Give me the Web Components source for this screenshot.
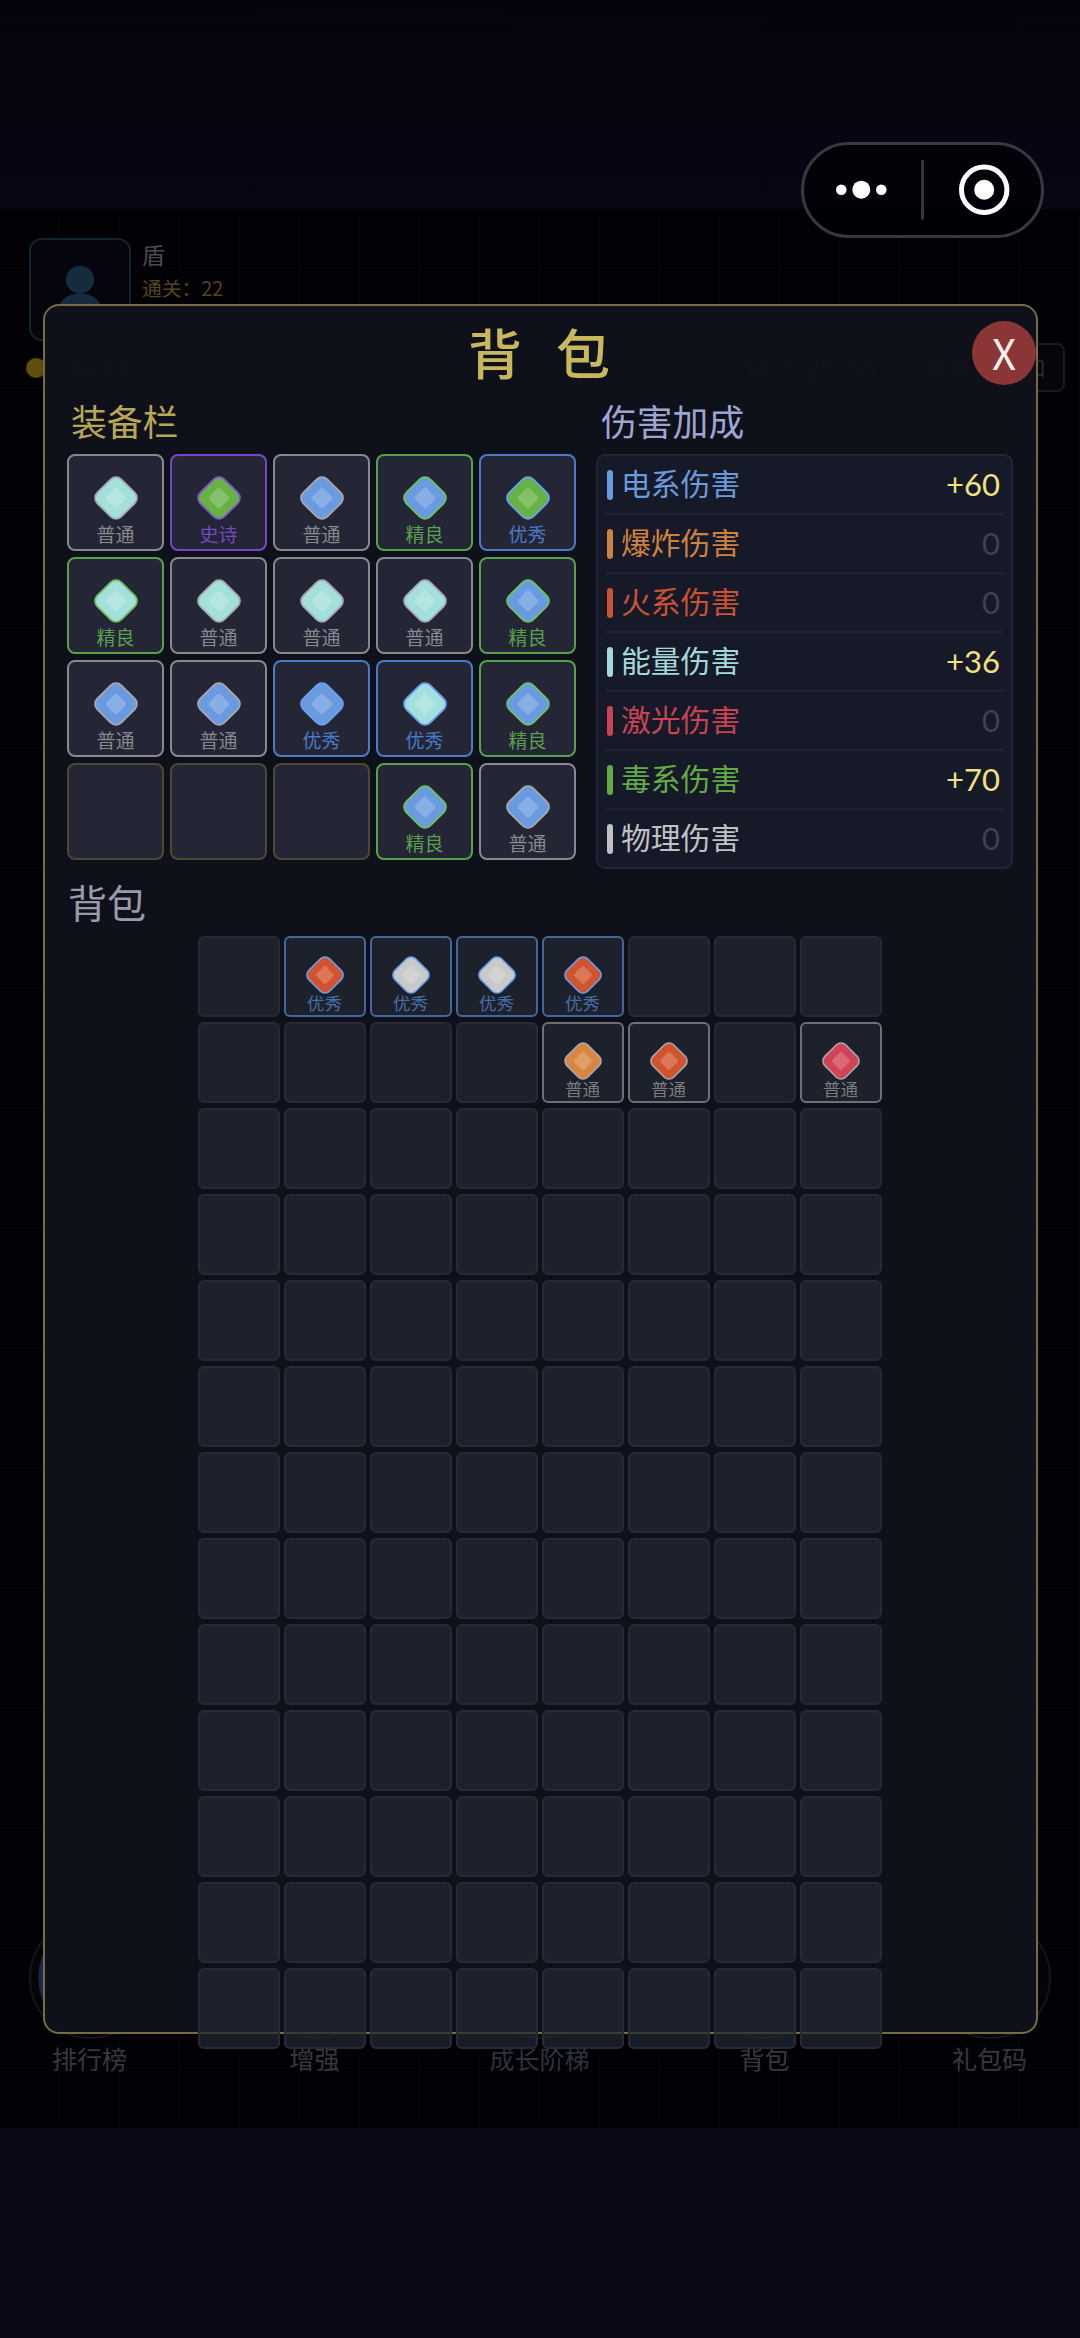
<!DOCTYPE html>
<html lang="zh-CN">
<head>
<meta charset="utf-8">
<title>背包</title>
<style>
html,body{margin:0;padding:0;background:#020206}
body{width:1080px;height:2338px;overflow:hidden;font-family:"Noto Sans CJK SC",sans-serif}
</style>
</head>
<body>
<game-app></game-app>
<script>
const define=(name,css,html)=>{
  customElements.define(name,class extends HTMLElement{
    connectedCallback(){
      if(this.shadowRoot)return;
      const root=this.attachShadow({mode:'open'});
      root.innerHTML=`<style>*{box-sizing:border-box}${css}</style>${typeof html==='function'?html(this):html}`;
    }
  });
};

const RANK={
  n:['普通','#88888f'],g:['精良','#58a04d'],b:['优秀','#4a7ac8'],p:['史诗','#7448c4']
};
const KIND={
  e:'#6a9be0',c:'#a3e0db',v:'#66b244',f:'#d2542f',w:'#c9c9c9',o:'#d78741',l:'#d24355'
};

/* rounded diamond gem: fill by damage kind, rim by rarity */
define('gem-icon',`
:host{display:block;width:var(--gem);height:var(--gem)}
svg{display:block;width:100%;height:100%;overflow:visible}`,
el=>`<svg viewBox="-22 -22 44 44"><g transform="rotate(45)">
<rect x="-17" y="-17" width="34" height="34" rx="7.5" fill="${el.getAttribute('fill')}" stroke="${el.getAttribute('rim')}" stroke-width="1.8"/>
<rect x="-8" y="-8" width="16" height="16" rx="2.5" fill="#fff" fill-opacity=".2"/></g></svg>`);

define('item-slot',`
:host{display:flex;flex-direction:column;align-items:center;box-sizing:border-box;border:2px solid var(--slot-line);background:var(--slot-bg);border-radius:var(--slot-r);padding-top:var(--slot-pt)}
span{font-size:var(--slot-fs);line-height:1;margin-top:var(--slot-gap);white-space:nowrap}`,
el=>{
  const r=el.getAttribute('rank');
  if(!r)return'';
  const [name,color]=RANK[r];
  const bag=el.hasAttribute('bag');
  const edge=bag?({b:'#43669e',n:'#6f7076'})[r]:color;
  el.style.borderColor=edge;
  const rim=({n:'#a8a8ae',g:'#6fc25e',b:'#6aa0f2',p:'#8554da'})[r];
  return `<gem-icon fill="${KIND[el.getAttribute('kind')]}" rim="${rim}"></gem-icon><span style="color:${bag?({b:'#466da6',n:'#7a7b7f'})[r]:color}">${name}</span>`;
});

define('equip-grid',`
:host{display:grid;grid-template-columns:repeat(5,97px);grid-auto-rows:97px;gap:6px;
--slot-line:#4c4832;--slot-bg:#242636;--slot-r:8px;--slot-pt:20px;--slot-fs:19px;--slot-gap:4px;--gem:44px}`,
()=>'nc pv ne ge bv gc nc nc nc ge ne ne be bc ge - - - ge ne'.split(' ').map(s=>s==='-'?'<item-slot></item-slot>':`<item-slot rank="${s[0]}" kind="${s[1]}"></item-slot>`).join(''));

define('bag-grid',`
:host{display:grid;grid-template-columns:repeat(8,82px);grid-auto-rows:81px;gap:5px 4px;
--slot-line:#272a34;--slot-bg:rgba(34,40,52,.7);--slot-r:6px;--slot-pt:18px;--slot-fs:17.5px;--slot-gap:0px;--gem:38px}`,
()=>{
  const items={1:'bf',2:'bw',3:'bw',4:'bf',12:'no',13:'nf',15:'nl'};
  let h='';
  for(let i=0;i<104;i++){const s=items[i];h+=s?`<item-slot bag rank="${s[0]}" kind="${s[1]}"></item-slot>`:'<item-slot bag></item-slot>'}
  return h;
});

define('damage-row',`
:host{display:flex;align-items:center;height:59px;padding:0 4px 0 2px;border-bottom:2px solid #20222f;box-sizing:border-box}
:host(:last-child){border-color:transparent}
i{width:6px;height:30px;border-radius:3px;background:var(--c);margin-right:8px}
.name{flex:1;font-size:29.8px;line-height:30px;color:var(--c);padding-bottom:5px}
.val{font:31px/1 Lato,sans-serif;color:#f0e080}
.zero{color:#40414e}`,
el=>`<i></i><span class="name"><slot></slot></span><span class="val ${el.getAttribute('value')==='0'?'zero':''}">${el.getAttribute('value')}</span>`);

define('damage-panel',`
:host{display:block;box-sizing:border-box;height:415px;border:2px solid #222535;border-radius:9px;background:#161927;padding:0 7px}`,
`<damage-row style="--c:#6a9bdd" value="+60">电系伤害</damage-row>
<damage-row style="--c:#cf8140" value="0">爆炸伤害</damage-row>
<damage-row style="--c:#ca5235" value="0">火系伤害</damage-row>
<damage-row style="--c:#a3d9db" value="+36">能量伤害</damage-row>
<damage-row style="--c:#c94353" value="0">激光伤害</damage-row>
<damage-row style="--c:#62ab45" value="+70">毒系伤害</damage-row>
<damage-row style="--c:#c0c1c5" value="0">物理伤害</damage-row>`);

define('bag-dialog',`
:host{display:flex;flex-direction:column;box-sizing:border-box;border:2px solid #756c44;border-radius:16px;background:rgba(15,18,27,.965);padding:0 23px 0 22px}
:host>*,header,.cols,.bag,bag-grid{flex:none}
header{height:94px;display:flex;align-items:center;justify-content:center}
h1{margin:0 0 3px -2px;font-size:54px;font-weight:500;line-height:1;color:#c8b75c;word-spacing:22px;white-space:pre}
h2{margin:0;font-size:35.8px;font-weight:400;line-height:40px;height:54px;padding-left:4px}
button{position:absolute;right:0;top:15px;width:64px;height:64px;border:0;border-radius:50%;padding:0 0 3px;background:#8a3536;color:#fff0ea;font:42px/1 "Noto Sans CJK SC",sans-serif}
.cols{display:flex;gap:20px;height:469px}
.l{width:509px}.r{flex:1}
.l h2{color:#b8a655}.r h2{color:#a0a4d2;padding-left:5px}
h2.bag{color:#9a9aac;font-size:39px;height:67px;line-height:64px;padding-left:1px}
bag-grid{align-self:center;margin-left:-1px}`,
`<header><h1>背 包</h1><button aria-label="close">X</button></header>
<div class="cols"><div class="l"><h2>装备栏</h2><equip-grid></equip-grid></div>
<div class="r"><h2>伤害加成</h2><damage-panel></damage-panel></div></div>
<h2 class="bag">背包</h2><bag-grid></bag-grid>`);

define('menu-capsule',`
:host{display:block}svg{display:block}`,
`<svg width="243" height="96" viewBox="0 0 243 96"><rect x="1.5" y="1.5" width="240" height="93" rx="46.5" fill="#000004" fill-opacity=".6" stroke="#38383f" stroke-width="3"/>
<g fill="#fff"><circle cx="40.3" cy="47.7" r="5.3"/><circle cx="60.3" cy="47.7" r="9"/><circle cx="80.3" cy="47.7" r="5.3"/><circle cx="183.2" cy="47.7" r="10"/></g>
<path d="M121.6 18V77.5" stroke="#38383f" stroke-width="3"/><circle cx="183.2" cy="47.7" r="22.7" fill="none" stroke="#fff" stroke-width="5"/></svg>`);

define('player-info',`
:host{display:flex;gap:11px;padding:29px 0 0 29px;height:134px;box-sizing:border-box}
svg{display:block;flex:none}
.t{display:flex;flex-direction:column}
b{font-weight:400;font-size:23px;line-height:32px;color:#4a4a50}
span{font-size:19.8px;line-height:36px;color:#55441e;white-space:nowrap}`,
`<svg width="102" height="103" viewBox="0 0 102 103"><rect x="1" y="1" width="100" height="101" rx="12" fill="#05060d" stroke="#14242f" stroke-width="2"/><circle cx="51" cy="41.7" r="14" fill="#162c3c"/><path d="M29 75C29 62 39 55.5 51 55.5S73 62 73 75Z" fill="#162c3c"/></svg>
<div class="t"><b>盾</b><span>通关：22</span></div>`);

define('resource-bar',`
:host{display:flex;align-items:center;height:49px;padding:0 15px 0 26px;font-size:27px;color:#25252b;box-sizing:border-box}
i{width:20px;height:20px;border-radius:50%;background:#5e4f0c;margin-right:9px}
.e{margin-left:auto;margin-right:30px}
.p{height:49px;display:flex;align-items:center;border:2px solid #1c1924;border-radius:8px;background:#06050a;padding:0 17px 0 20px;font-size:20px;line-height:1;color:#2e2d35;white-space:nowrap;width:159px;justify-content:space-between;box-sizing:border-box}`,
`<i></i><div>36227</div><div class="e">体力 25/50</div><div class="p"><span>特权</span><span>口</span></div>`);

define('nav-item',`
:host{display:flex;flex-direction:column;align-items:center;width:122px;font-size:25px;color:var(--c,#38383d);white-space:nowrap}
svg{display:block;overflow:visible}span{line-height:36px;margin:1px 1px 0 0}`,
el=>`<svg width="122" height="122" viewBox="0 0 122 122"><circle cx="61" cy="61" r="60" fill="#040409" stroke="#15151b" stroke-width="2"/>${el.hasAttribute('glow')?'<path d="M14 38C8 50 8 72 14 84Z" fill="#18294f"/>':''}</svg><span><slot></slot></span>`);

define('game-app',`
:host{display:flex;flex-direction:column;position:relative;width:1080px;height:2338px;background:#050611;overflow:hidden}
.top{height:209px;background:linear-gradient(#03040c,#060713)}
main{height:1919px;display:flex;flex-direction:column;background-color:#020206;
background-image:linear-gradient(90deg,transparent 58px,#040408 58px),linear-gradient(transparent 58px,#040408 58px);background-size:60px 60px}
nav{display:flex;justify-content:space-between;padding:0 29px 52px;margin-top:auto}
.foot{flex:1;background:#0c0818}
menu-capsule{position:absolute;left:801px;top:142px}
bag-dialog{position:absolute;left:43px;top:304px;width:995px;height:1730px}`,
`<div class="top"></div>
<main><player-info></player-info><resource-bar></resource-bar>
<nav><nav-item glow>排行榜</nav-item><nav-item>增强</nav-item><nav-item style="--c:#2c333c">成长阶梯</nav-item><nav-item>背包</nav-item><nav-item>礼包码</nav-item></nav></main>
<div class="foot"></div>
<bag-dialog></bag-dialog><menu-capsule></menu-capsule>`);
</script>
</body>
</html>
